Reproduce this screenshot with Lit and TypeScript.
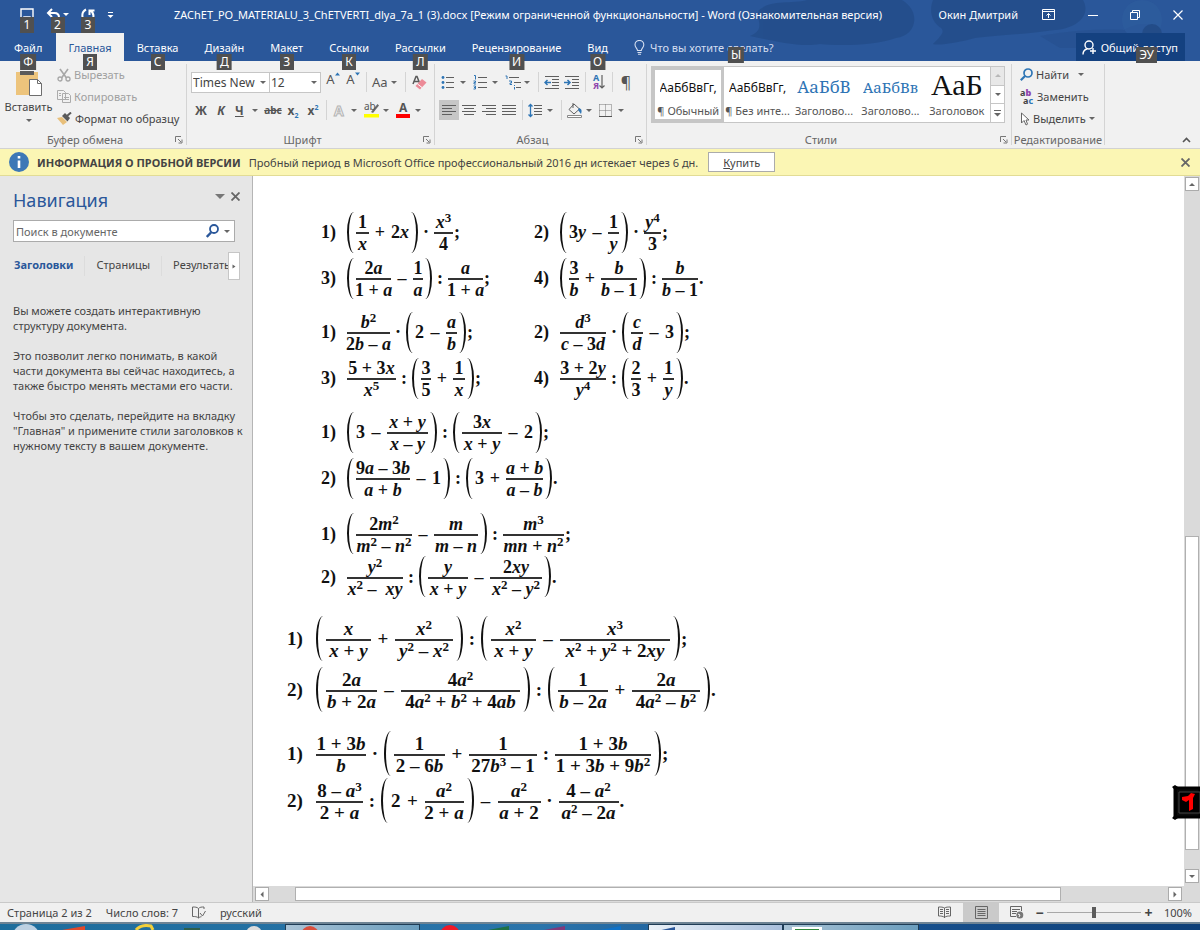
import { LitElement, html, css, svg, nothing, type TemplateResult } from "lit";
import { customElement, property } from "lit/decorators.js";
import { classMap } from "lit/directives/class-map.js";
import { styleMap } from "lit/directives/style-map.js";

const icon = (w: number, h: number, body: TemplateResult | unknown) =>
  html`<svg class="icon" width=${w} height=${h} viewBox="0 0 ${w} ${h}" fill="none" aria-hidden="true">${body}</svg>`;

const lines = (rows: number[][], color = "#5f5f5f") =>
  rows.map(([x1, x2, y]) => svg`<path d="M${x1} ${y}.5H${x2}" stroke=${color}/>`);

const ic = {
  save: () => icon(14, 14, svg`<path d="M1 1h12v12H1z M4 13V9h6v4" stroke="#fff" stroke-width="1.4"/>`),
  undo: () => icon(14, 14, svg`<path d="M6 1L2 5l4 4M2 5h6.500c3 0 4.500 2 4.500 4.500S11 13 8 13" stroke="#fff" stroke-width="2"/>`),
  redo: () => icon(14, 14, svg`<path d="M5 1.500C2 3 1 6 1.500 9s3 4.500 6 4.500 5-3 5-5.500-1-4-3-5.500M8.500 7V2.500h5" stroke="#fff" stroke-width="2"/>`),
  custom: () => icon(7, 8, svg`<path d="M1 1.500h5" stroke="#fff"/><path d="M0.500 4h6L3.500 7z" fill="#fff"/>`),
  ribbonOpt: () => icon(13, 11, svg`<path d="M.5.5h12v10H.5zM.5 2.500h12M6.500 9V4.500M4.500 6.500l2-2 2 2" stroke="#fff"/>`),
  min: () => icon(10, 10, svg`<path d="M0 5.500h10" stroke="#fff"/>`),
  restore: () => icon(10, 10, svg`<path d="M.5 2.500h7v7h-7zM2.500 2.500v-2h7v7h-2" stroke="#fff"/>`),
  close: () => icon(10, 10, svg`<path d="M.5.5l9 9M9.500.5l-9 9" stroke="#fff" stroke-width="1.200"/>`),
  bulb: () => icon(11, 15, svg`<path d="M3.500 10.500C3.500 8.500 1 7.500 1 4.800a4.400 4.400 0 0 1 8.800 0c0 2.700-2.500 3.700-2.500 5.700zM3.500 12.500h4M4 14.300h3" stroke="#d4def0" stroke-width="1.100"/>`),
  share: () => icon(15, 15, svg`<circle cx="7" cy="5" r="4" stroke="#fff" stroke-width="1.400"/><path d="M1 14.500c0-3.500 2-5.200 4.500-5.800M11 8v6M8 11h6" stroke="#fff" stroke-width="1.400"/>`),
  paste: () => icon(28, 28, svg`<path d="M1 3h22v23H1z" fill="#edc47c"/><path d="M5 2h14v4H5z" fill="#5b5b5b"/><path d="M14.500 10.500h8l4 4v12h-12z" fill="#fff" stroke="#6d6d6d"/><path d="M22.500 10.500v4h4" stroke="#6d6d6d"/>`),
  cut: () => icon(14, 14, svg`<path d="M3 1l6.500 9M11 1L4.500 10" stroke="#a6a6a6" stroke-width="1.600"/><circle cx="3" cy="11" r="2" stroke="#a6a6a6" stroke-width="1.300"/><circle cx="11" cy="11" r="2" stroke="#a6a6a6" stroke-width="1.300"/>`),
  copy: () => icon(14, 13, svg`<path d="M.5.5h6l2 2v7h-8zM5.500 3.500h6l2 2v7h-8z" fill="#f1f1f1" stroke="#ababab"/><path d="M2 3.500h2M2 5.500h2M7 7.500h5M7 9.500h5" stroke="#ababab"/>`),
  brush: () => icon(15, 13, svg`<path d="M0 6l5-1 5 5-4 3z" fill="#e8bf7a"/><path d="M5 4l3-3 5 5-2.500 3.500z" fill="#5a5a5a"/><path d="M10 4l4-3.500" stroke="#5a5a5a" stroke-width="2"/>`),
  launcher: () => icon(8, 8, svg`<path d="M.5 6V.5H6M3 3l3 3M7 3.500V7H3.500" stroke="#777"/>`),
  grow: () => icon(5, 4, svg`<path d="M0 3.500h5L2.500.5z" fill="#2e75b5"/>`),
  shrink: () => icon(5, 4, svg`<path d="M0 .5h5L2.500 3.500z" fill="#2e75b5"/>`),
  eraser: () => icon(15, 15, svg`<path d="M1 9L4 1.500h1L8 9M2 6.500h4.500" stroke="#5a5a5a" stroke-width="1.500"/><path d="M3.500 11L10 4l4.500 3.500L8 14.500z" fill="#ec8a97"/><path d="M5.500 9l4.500 3.500" stroke="#fff"/>`),
  pen: () => icon(16, 16, svg`<path d="M7 10l6.500-8 1.500 1.500L9 11z" fill="#6a6a6a"/><path d="M0 12h15v3.500H0z" fill="#ff0"/>`),
  bullets: () => icon(14, 15, svg`<circle cx="2" cy="2.500" r="1.400" fill="#2e75b5"/><circle cx="2" cy="7.500" r="1.400" fill="#2e75b5"/><circle cx="2" cy="12.500" r="1.400" fill="#2e75b5"/>${lines([[5, 13, 2], [5, 13, 7], [5, 13, 12]])}`),
  numbers: () => icon(14, 15, svg`<path d="M1 .5h1.500v4M.5 6h2v1.500H1V9h2M.5 11h2v3H.5M1 12.500h2" stroke="#2e75b5"/>${lines([[5, 14, 2], [5, 14, 7], [5, 14, 12]])}`),
  multi: () => icon(16, 15, svg`<path d="M.5 1H2v3M4 6h2.500v2H5v1.500h2M9.500 10v1M9.500 12v2.500" stroke="#2e75b5"/>${lines([[4, 14, 2], [9, 16, 7], [11, 16, 12]])}`),
  dedent: () => icon(16, 13, svg`<path d="M7 6.500H1M3.500 4L1 6.500 3.500 9" stroke="#2e75b5" stroke-width="1.500"/>${lines([[1, 15, 0], [8, 15, 3], [8, 15, 6], [8, 15, 9], [1, 15, 12]])}`),
  indent: () => icon(16, 13, svg`<path d="M0 6.500h6M3.500 4L6 6.500 3.500 9" stroke="#2e75b5" stroke-width="1.500"/>${lines([[1, 15, 0], [8, 15, 3], [8, 15, 6], [8, 15, 9], [1, 15, 12]])}`),
  down: () => icon(6, 14, svg`<path d="M3 0v13M.5 10.500L3 13l2.500-2.500" stroke="#5f5f5f" stroke-width="1.200"/>`),
  left: () => icon(14, 11, svg`${lines([[0, 14, 0], [0, 10, 3], [0, 14, 6], [0, 10, 9]])}`),
  center: () => icon(14, 11, svg`${lines([[0, 14, 0], [2, 12, 3], [0, 14, 6], [2, 12, 9]])}`),
  right: () => icon(14, 11, svg`${lines([[0, 14, 0], [4, 14, 3], [0, 14, 6], [4, 14, 9]])}`),
  justify: () => icon(14, 11, svg`${lines([[0, 14, 0], [0, 14, 3], [0, 14, 6], [0, 14, 9]])}`),
  spacing: () => icon(14, 15, svg`<path d="M2.500 1v13M.5 3.500l2-2 2 2M.5 11.500l2 2 2-2" stroke="#2e75b5" stroke-width="1.300"/>${lines([[6, 14, 2], [6, 14, 5], [6, 14, 8], [6, 14, 11]])}`),
  bucket: () => icon(16, 15, svg`<path d="M7 1L2 6.500 7 11l5.500-5zM6 0v5" stroke="#5f5f5f"/><path d="M12 5c3 1 3 3 2 6-1-1-2-3-3-4z" fill="#2e75b5"/><path d="M.5 12.500h14v2H.5z" fill="#fff" stroke="#888"/>`),
  borders: () => icon(13, 13, svg`<path d="M.5.5h12v12M.5.5v12M6.500.5v12M.5 6.500h12" stroke="#777" stroke-dasharray="1 1"/><path d="M0 12.500h13" stroke="#555"/>`),
  find: (c = "#2e75b5") => icon(13, 13, svg`<circle cx="8" cy="5" r="4" stroke=${c} stroke-width="1.700"/><path d="M5 8L.8 12.200" stroke=${c} stroke-width="2.200"/>`),
  cursor: () => icon(10, 14, svg`<path d="M1.500 1v10l2.500-2.500L6 13l1.500-.8L6 8h3z" fill="#fff" stroke="#666"/>`),
  chevronUp: () => icon(9, 6, svg`<path d="M1 5l3.500-3.500L8 5" stroke="#555" stroke-width="1.600"/>`),
  cross: () => icon(9, 9, svg`<path d="M.5.5l8 8M8.500.5l-8 8" stroke="#666" stroke-width="1.800"/>`),
  more: () => icon(7, 7, svg`<path d="M0 .5h7" stroke="#666"/><path d="M0 3h7L3.500 6.500z" fill="#666"/>`),
  info: () => icon(20, 20, svg`<circle cx="10" cy="10" r="10" fill="#3d78b6"/><path d="M10 8.500V16M10 4v2.500" stroke="#fff" stroke-width="2.600"/>`),
  proof: () => icon(14, 13, svg`<path d="M6.500 2.500C5 1 3 1 .5 1v9.500c2.500 0 4.500 0 6 1.500zM6.500 2.500c1.500-1.500 3-1.500 5.500-1.500v2M6.500 12c1-1 2-1.200 3-1.300M8 7l2.500 3L13.500 5" stroke="#666"/>`),
  read: () => icon(14, 13, svg`<path d="M6.500 2C5 1 3 1 .5 1v9c2.500 0 4.500 0 6 1.500C8 10 10 10 12.500 10V1C10 1 8 1 6.500 2zV12M2 3.500h3M2 5.500h3M2 7.500h3M8 3.500h3M8 5.500h3M8 7.500h3" stroke="#666"/>`),
  print: () => icon(13, 13, svg`<path d="M.5.500h12v12H.5zM2.500 3.500h8M2.500 5.500h8M2.500 7.500h8M2.500 9.500h8" stroke="#666"/>`),
  web: () => icon(14, 13, svg`<path d="M11.500 5V.5H.5v10H6M2 3.500h8M2 5.500h5M2 7.500h4" stroke="#666"/><circle cx="9.800" cy="9" r="3.500" fill="#777"/><path d="M8 8l2 1-1 2" stroke="#fff"/>`),
  search: () => icon(13, 14, svg`<circle cx="8" cy="5" r="4" stroke="#2a579a" stroke-width="1.800"/><path d="M5 8.500L.8 13" stroke="#2a579a" stroke-width="2.400"/>`),
};

const base = css`
  :host { box-sizing: border-box; }
  *, *::before, *::after { box-sizing: border-box; }
  button, input, select { font: inherit; color: inherit; background: none; border: 0; padding: 0; margin: 0; border-radius: 0; outline: 0; }
  .icon { display: block; flex: none; }
  .caret { width: 0; height: 0; flex: none; border: 3px solid transparent; border-top-color: #666; border-bottom: 0; }
`;

/** One worked expression: fractions, brackets, terms and signs laid out in a row. */
type Token = string | [num: string, den: string, bar: number];

@customElement("math-line")
class MathLine extends LitElement {
  @property() label = "";
  @property({ attribute: false }) tokens: Token[] = [];

  static styles = [base, css`
    :host { display: flex; align-items: center; font: bold var(--size, 18px)/20px "Liberation Serif", "Times New Roman", serif; color: #111; white-space: pre; }
    .label { width: var(--label, 26px); flex: none; }
    .sign { width: var(--sign, 22px); text-align: center; flex: none; }
    .tight { width: var(--tight, 16px); text-align: center; flex: none; }
    .end { padding-left: 1px; }
    .frac { display: flex; flex-direction: column; align-items: center; flex: none; }
    .frac > span { height: 20px; display: flex; justify-content: center; width: 100%; }
    .frac > span + span { border-top: 2px solid #333; }
    .paren { width: 7px; height: var(--paren, 41px); flex: none; border-left: 2px solid #111; border-radius: 7px 0 0 7px / 50% 0 0 50%; margin-right: var(--inner, 2px); }
    .paren.shut { border-left: 0; border-right: 2px solid #111; border-radius: 0 7px 7px 0 / 0 50% 50% 0; margin: 0 0 0 var(--inner, 2px); }
    sup { font-size: 13px; line-height: 0; vertical-align: 6px; }
  `];

  private term(source: string) {
    return html`<span>${source.split(/(\^\d|[a-z])/).map((p) =>
      p[0] === "^" ? html`<sup>${p.slice(1)}</sup>` : /^[a-z]$/.test(p) ? html`<i>${p}</i>` : p)}</span>`;
  }

  private token(t: Token) {
    if (Array.isArray(t)) {
      return html`<span class="frac" style=${styleMap({ width: `${t[2]}px` })}><span>${this.term(t[0])}</span><span>${this.term(t[1])}</span></span>`;
    }
    if (t === "(") return html`<span class="paren" role="img" aria-label="("></span>`;
    if (t === ")") return html`<span class="paren shut" role="img" aria-label=")"></span>`;
    if (t === "+" || t === "−") return html`<span class="sign">${t === "−" ? "–" : t}</span>`;
    if (t === ":" || t === "·") return html`<span class="tight">${t}</span>`;
    if (t === ";" || t === ".") return html`<span class="end">${t}</span>`;
    return this.term(t);
  }

  render() {
    return html`<span class="label">${this.label}</span>${this.tokens.map((t) => this.token(t))}`;
  }
}

interface Block { kind: string; items: [string, Token[]][]; }

const BLOCKS: Block[] = [
  { kind: "pair", items: [
    ["1)", ["(", ["1", "x", 13], "+", "2x", ")", "·", ["x^3", "4", 19], ";"]],
    ["2)", ["(", "3y", "−", ["1", "y", 11], ")", "·", ["y^4", "3", 17], ";"]],
    ["3)", ["(", ["2a", "1 + a", 35], "−", ["1", "a", 10], ")", ":", ["a", "1 + a", 35], ";"]],
    ["4)", ["(", ["3", "b", 10], "+", ["b", "b – 1", 36], ")", ":", ["b", "b – 1", 36], "."]],
  ] },
  { kind: "pair", items: [
    ["1)", [["b^2", "2b – a", 43], "·", "(", "2", "−", ["a", "b", 11], ")", ";"]],
    ["2)", [["d^3", "c – 3d", 46], "·", "(", ["c", "d", 12], "−", "3", ")", ";"]],
    ["3)", [["5 + 3x", "x^5", 49], ":", "(", ["3", "5", 10], "+", ["1", "x", 12], ")", ";"]],
    ["4)", [["3 + 2y", "y^4", 46], ":", "(", ["2", "3", 10], "+", ["1", "y", 11], ")", "."]],
  ] },
  { kind: "single", items: [
    ["1)", ["(", "3", "−", ["x + y", "x – y", 41], ")", ":", "(", ["3x", "x + y", 40], "−", "2", ")", ";"]],
    ["2)", ["(", ["9a – 3b", "a + b", 54], "−", "1", ")", ":", "(", "3", "+", ["a + b", "a – b", 37], ")", "."]],
  ] },
  { kind: "dense", items: [
    ["1)", ["(", ["2m^2", "m^2 – n^2", 56], "−", ["m", "m – n", 44], ")", ":", ["m^3", "mn + n^2", 61], ";"]],
    ["2)", [["y^2", "x^2 –  xy", 56], ":", "(", ["y", "x + y", 40], "−", ["2xy", "x^2 – y^2", 52], ")", "."]],
  ] },
  { kind: "large", items: [
    ["1)", ["(", ["x", "x + y", 45], "+", ["x^2", "y^2 – x^2", 58], ")", ":", "(", ["x^2", "x + y", 45], "−", ["x^3", "x^2 + y^2 + 2xy", 110], ")", ";"]],
    ["2)", ["(", ["2a", "b + 2a", 51], "−", ["4a^2", "4a^2 + b^2 + 4ab", 119], ")", ":", "(", ["1", "b – 2a", 50], "+", ["2a", "4a^2 – b^2", 68], ")", "."]],
  ] },
  { kind: "large last", items: [
    ["1)", [["1 + 3b", "b", 50], "·", "(", ["1", "2 – 6b", 51], "+", ["1", "27b^3 – 1", 68], ":", ["1 + 3b", "1 + 3b + 9b^2", 96], ")", ";"]],
    ["2)", [["8 – a^3", "2 + a", 47], ":", "(", "2", "+", ["a^2", "2 + a", 39], ")", "−", ["a^2", "a + 2", 43], "·", ["4 – a^2", "a^2 – 2a", 60], "."]],
  ] },
];

const TABS: [string, string][] = [
  ["Файл", "Ф"], ["Главная", "Я"], ["Вставка", "С"], ["Дизайн", "Д"], ["Макет", "З"],
  ["Ссылки", "К"], ["Рассылки", "Л"], ["Рецензирование", "И"], ["Вид", "О"],
];

const STYLES: [string, string, string][] = [
  ["АаБбВвГг,", "¶ Обычный", "body"], ["АаБбВвГг,", "¶ Без инте...", "body"],
  ["АаБбВ", "Заголово...", "h1"], ["АаБбВв", "Заголово...", "h2"], ["АаБ", "Заголовок", "title"],
];

@customElement("app-root")
class AppRoot extends LitElement {
  static styles = [base, css`
    :host { display: flex; flex-direction: column; height: 100vh; overflow: hidden; position: relative; font: 11px/15px "Noto Sans", "Open Sans", sans-serif; color: #444; background: #fff; }
    .tip { position: absolute; top: 100%; left: 50%; transform: translate(-50%, -7px); min-width: 14px; height: 16px; padding: 0 3px; background: #505050; color: #fff; font-size: 12px; line-height: 16px; text-align: center; z-index: 3; }
    header { background: #2a579a; color: #fff; position: relative; flex: none; }
    .clouds { position: absolute; top: 0; right: 0; }
    .titlebar { display: flex; align-items: center; height: 33px; padding-bottom: 4px; position: relative; }
    .qat { display: flex; align-items: center; width: 120px; padding-left: 20px; gap: 12px; }
    .qat button { position: relative; display: flex; align-items: center; gap: 3px; }
    .qat .caret { border-top-color: #fff; }
    .qat .tip { transform: translate(-50%, -5px); }
    .title { flex: 1; text-align: center; white-space: nowrap; overflow: hidden; }
    .user { width: 82px; text-align: right; white-space: nowrap; }
    .win { display: flex; justify-content: space-between; width: 182px; padding: 0 17px 0 24px; }
    .tabs { display: flex; height: 28px; position: relative; }
    .tab { position: relative; padding: 0 13px; display: flex; align-items: center; white-space: nowrap; }
    .tab.file { padding: 0 14px; }
    .tab.on { background: #f1f1f1; color: #2a579a; padding: 0 12px; }
    .tell { position: relative; display: flex; align-items: center; gap: 5px; margin-left: 13px; flex: 1; }
    .tell input { width: 130px; color: #d4def0; }
    .tell input::placeholder { color: #d4def0; opacity: 1; }
    .tell .tip { left: 102px; transform: translate(-50%, -14px); }
    .share { position: relative; background: #144180; display: flex; align-items: center; gap: 4px; padding: 0 7px 0 6px; margin-right: 15px; white-space: nowrap; }
    .share .tip { left: auto; right: 28px; transform: translateY(-14px); }

    .ribbon { display: flex; height: 88px; background: #f1f1f1; border-bottom: 1px solid #d2d2d2; flex: none; }
    .group { position: relative; display: flex; flex-direction: column; padding: 8px 4px 0; border-right: 1px solid #d4d4d4; margin: 3px 0; flex: none; }
    .group > footer { position: absolute; left: 0; right: 0; bottom: -2px; text-align: center; color: #666; display: flex; justify-content: center; height: 15px; padding-right: 16px; }
    .group > footer.bare { padding-right: 0; }
    .group > footer button { position: absolute; right: 3px; top: 4px; }
    .clip { width: 187px; } .font { width: 248px; } .para { width: 212px; } .styles { width: 365px; } .edit { width: 93px; }
    .clip { flex-direction: row; padding-top: 0; }
    .paste { width: 49px; display: flex; flex-direction: column; align-items: center; padding-top: 5px; gap: 2px; }
    .paste .caret { margin-top: 3px; }
    .stack { display: flex; flex-direction: column; gap: 1px; }
    .stack button { display: flex; align-items: center; gap: 3px; height: 21px; white-space: nowrap; color: #444; padding-left: 4px; }
    .stack button:disabled { color: #a0a0a0; }
    .line { display: flex; align-items: center; height: 20px; }
    .line + .line { margin-top: 8px; }
    .combo { position: relative; height: 21px; background: #fff; border: 1px solid #c6c6c6; display: flex; align-items: center; }
    .combo select { width: 100%; height: 19px; appearance: none; padding: 0 13px 0 1px; font-size: 12px; text-overflow: clip; overflow: hidden; }
    .combo .caret { position: absolute; right: 3px; top: 8px; pointer-events: none; }
    .combo.face { width: 79px; } .combo.size { width: 52px; margin-left: -1px; margin-right: 2px; }
    .tool { width: 20px; height: 20px; display: flex; align-items: center; justify-content: center; flex: none; font-weight: bold; font-size: 12px; color: #555; }
    .tool.drop { width: 32px; justify-content: space-between; padding: 0 5px 0 2px; }
    .tool.on { background: #c6c6c6; }
    .tool sub, .tool sup { font-size: 7px; line-height: 0; color: #2e75b5; }
    .tool.plain { font-weight: normal; font-size: 13px; }
    .tool.small { font-size: 10px; }
    .tool.pad { padding-left: 4px; }
    .raised { align-items: flex-start; }
    .ghost { color: #f1f1f1; -webkit-text-stroke: 1px #b4b4b4; font-size: 14px; }
    .red { border-bottom: 4px solid #f00; line-height: 12px; padding: 0 3px; height: 16px; }
    .mark { position: relative; display: block; }
    .mark span { position: absolute; left: 0; top: -3px; font-size: 10px; font-weight: normal; }
    .az { font-size: 9px; line-height: 8px; color: #2e75b5; } .az span { display: block; } .az span + span { color: #8e44ad; }
    .pil { font-size: 16px; }
    .sep { width: 1px; height: 20px; background: #d4d4d4; margin: 0 3px; flex: none; }
    .gallery { display: flex; height: 57px; background: #fff; border: 1px solid #c6c6c6; width: 354px; margin-top: -6px; }
    .style { width: 67px; flex: 1; display: flex; flex-direction: column; align-items: center; justify-content: flex-end; overflow: hidden; white-space: nowrap; padding-bottom: 4px; border: 0 solid #c6c6c6; color: #555; }
    .style.on { border-width: 3px; padding-bottom: 1px; }
    .sample { height: 30px; line-height: 30px; overflow: hidden; color: #111; max-width: 62px; }
    .s-body { font-size: 12px; }
    .s-h1 { font-family: "Noto Serif", "Liberation Serif", serif; font-size: 17px; line-height: 28px; color: #2e74b5; }
    .s-h2 { font-family: "Noto Serif", "Liberation Serif", serif; font-size: 15px; line-height: 28px; color: #2e74b5; }
    .s-title { font-family: "Liberation Serif", serif; font-size: 30px; line-height: 24px; max-width: 55px; }
    .scroll { width: 14px; display: flex; flex-direction: column; border-left: 1px solid #c6c6c6; }
    .scroll button { flex: 1; display: flex; align-items: center; justify-content: center; }
    .scroll button + button { border-top: 1px solid #c6c6c6; }
    .scroll button:first-child { background: #e8e8e8; }
    .scroll button:first-child .caret { border-top-color: #b8b8b8; }
    .up { transform: rotate(180deg); }
    .edit { padding-top: 0; }
    .rep { display: flex; flex-direction: column; font-size: 9px; line-height: 8px; width: 14px; font-weight: bold; text-align: left; } .rep > span { height: 8px; } .rep b { color: #8e44ad; } .rep i { font-style: normal; color: #2e75b5; } .rep span + span { padding-left: 3px; }
    .fold { margin-left: auto; align-self: flex-end; padding: 0 9px 5px; }

    .notice { display: flex; align-items: center; height: 27px; background: #fbf6b4; border-bottom: 1px solid #e2dc95; padding: 0 10px 0 9px; white-space: nowrap; flex: none; }
    .notice strong { margin: 0 8px; }
    .buy { width: 67px; height: 20px; background: #fff; border: 1px solid #ababab; margin-left: 10px; }
    .notice .x { margin-left: auto; }

    main { flex: 1; min-height: 0; display: flex; background: #fff; }
    .nav { width: 253px; background: #e6e6e6; border-right: 1px solid #b5b5b5; padding: 12px 4px 0 13px; flex: none; }
    .head { display: flex; align-items: center; gap: 6px; height: 24px; padding-right: 8px; }
    .head h2 { flex: 1; margin: 0; font-weight: normal; font-size: 18px; line-height: 24px; color: #2a579a; }
    .head .caret { border-width: 5px 5px 0; border-top-color: #777; }
    .head button { display: flex; align-items: center; height: 9px; margin-bottom: 7px; }
    .find { display: flex; align-items: center; width: 222px; height: 22px; background: #fff; border: 1px solid #ababab; margin-top: 8px; padding: 0 4px 0 2px; gap: 5px; }
    .find input { flex: 1; min-width: 0; }
    .find input::placeholder { color: #666; opacity: 1; }
    .views { display: flex; align-items: center; height: 28px; margin-top: 10px; width: 227px; }
    .views .v { padding: 0 11px 3px; height: 20px; border-right: 1px solid #dcdcdc; }
    .views .v.on { font-weight: bold; color: #2a579a; padding: 0 11px 3px 1px; }
    .views .clip3 { flex: 1; overflow: hidden; white-space: nowrap; text-align: left; padding-left: 11px; border: 0; padding-right: 0; }
    .views .next { width: 12px; height: 28px; border: 1px solid #c6c6c6; background: #fff; display: flex; align-items: center; justify-content: center; }
    .next .caret { transform: rotate(-90deg); border-width: 3px 2px 0; }
    .nav p { margin: 0 0 15px; }
    .help { padding-top: 23px; }

    .doc { flex: 1; min-width: 0; display: flex; flex-direction: column; }
    .sheet { flex: 1; min-height: 0; display: flex; }
    .page { flex: 1; min-width: 0; overflow: hidden; padding: 33px 0 0 68px; }
    .block { display: grid; grid-auto-rows: 46px; margin-bottom: 8px; }
    .pair { grid-template-columns: 213px 1fr; }
    .single { margin-bottom: 11px; }
    .dense { grid-auto-rows: 43px; margin-bottom: 15px; }
    .large { grid-auto-rows: 51px; margin: 0 0 15px -34px; --size: 19px; --label: 29px; --sign: 24px; --tight: 18px; --paren: 45px; --inner: 3px; }
    .last { grid-auto-rows: 47px; }
    .vbar { width: 16px; background: #dadada; display: flex; flex-direction: column; align-items: center; padding: 1px 0 3px; flex: none; }
    .vbar button, .hbar button { width: 14px; height: 14px; background: #fff; border: 1px solid #ababab; display: flex; align-items: center; justify-content: center; flex: none; }
    .vthumb { width: 14px; flex: 314; background: #fff; border: 1px solid #b0b0b0; }
    .vbefore { flex: 347; } .vafter { flex: 19; }
    .hbar { height: 16px; background: #dadada; display: flex; align-items: center; padding: 0 18px 0 2px; flex: none; }
    .hthumb { height: 14px; flex: 767; background: #fff; border: 1px solid #b0b0b0; }
    .hbefore { flex: 26; } .hafter { flex: 107; }
    .lt { transform: rotate(90deg); } .rt { transform: rotate(-90deg); }

    .status { display: flex; align-items: center; height: 20px; background: #f0f0f0; border-top: 1px solid #c9c9c9; flex: none; padding: 0 8px 0 7px; }
    .status .words { margin: 0 14px; }
    .status .lang { margin-left: 14px; margin-right: auto; }
    .mode { width: 36px; height: 19px; display: flex; align-items: center; justify-content: center; }
    .mode.on { background: #cacaca; }
    .zoom { width: 94px; height: 14px; appearance: none; margin: 0 3px; }
    .zoom::-webkit-slider-runnable-track { height: 1px; background: #a8a8a8; }
    .zoom::-webkit-slider-thumb { appearance: none; width: 4px; height: 11px; margin-top: -5px; background: #5c5c5c; }
    .step { font-weight: bold; font-size: 14px; line-height: 14px; width: 9px; }
    .pct { width: 39px; text-align: right; }
    .task { display: flex; height: 8px; background: linear-gradient(90deg, #1d6d9c, #2a74ab 45%, #1b5796 65%, #0d3f78); border-top: 2px solid #6d8394; flex: none; overflow: hidden; }
    .task .pins { flex: 285 0 0; } .task .mid { flex: 228 0 0; } .task .rest { flex: 283 0 0; }
    .task .app { flex: 134 0 0; background: linear-gradient(90deg, #a9c3d6, #6a9dbd); border: 1px solid #1e3c55; border-bottom: 0; }
    .task .app.front { background: linear-gradient(90deg, #eaf1f8, #a9bfdc); }
    .task .icon { height: 6px; }
    .gadget { position: absolute; right: 0; top: 784px; z-index: 4; }
  `];

  private tip(key: string) { return html`<span class="tip">${key}</span>`; }
  private caret() { return html`<span class="caret"></span>`; }
  private tool(body: unknown, name: string, drop = false, extra: Record<string, boolean> = {}) {
    return html`<button class=${classMap({ tool: true, drop, ...extra })} aria-label=${name}>${body}${drop ? this.caret() : nothing}</button>`;
  }
  private footer(text: string, launch = true) {
    return html`<footer class=${classMap({ bare: !launch })}>${text}${launch ? html`<button aria-label="${text}: параметры">${ic.launcher()}</button>` : nothing}</footer>`;
  }

  private header() {
    return html`<header>
      <svg class="clouds" width="470" height="48" viewBox="0 0 470 48" aria-hidden="true">
        <g fill="#234c88" opacity="0.75">
          <path d="M20 36C40 28 20 14 32 8c10-8 30-4 45-8h95c20 12 14 36-6 38-20 8-60 8-76 6-20 4-50-4-70-8z"/>
          <path d="M203 0h150c8 14-4 28-28 30-30 4-60 6-80 8-14 4-36 8-42 6 8-8 12-12 8-16-10-6-12-18-8-28z"/>
          <path d="M310 36c20-4 60-8 84-6 20-12 36-4 38 6l-10 12H330z" opacity="0.5"/>
        </g>
        <circle cx="412" cy="20" r="20" fill="#2f5d9e" opacity="0.6"/>
        <circle cx="422" cy="34" r="10" fill="#234c88"/>
      </svg>
      <div class="titlebar">
        <div class="qat">
          <button aria-label="Сохранить">${ic.save()}${this.tip("1")}</button>
          <button aria-label="Отменить">${ic.undo()}${this.caret()}${this.tip("2")}</button>
          <button aria-label="Повторить">${ic.redo()}${this.tip("3")}</button>
          <button aria-label="Настройка панели">${ic.custom()}</button>
        </div>
        <div class="title">ZAChET_PO_MATERIALU_3_ChETVERTI_dlya_7a_1 (3).docx [Режим ограниченной функциональности] - Word (Ознакомительная версия)</div>
        <div class="user">Окин Дмитрий</div>
        <div class="win">
          <button aria-label="Лента">${ic.ribbonOpt()}</button><button aria-label="Свернуть">${ic.min()}</button>
          <button aria-label="Восстановить">${ic.restore()}</button><button aria-label="Закрыть">${ic.close()}</button>
        </div>
      </div>
      <nav class="tabs">
        ${TABS.map(([name, key], i) => html`<button class=${classMap({ tab: true, file: i === 0, on: i === 1 })}>${name}${this.tip(key)}</button>`)}
        <label class="tell">${ic.bulb()}<input placeholder="Что вы хотите сделать?" aria-label="Что вы хотите сделать?">${this.tip("Ы")}</label>
        <button class="share">${ic.share()}Общий доступ${this.tip("ЭУ")}</button>
      </nav>
    </header>`;
  }

  private ribbon() {
    const sep = html`<span class="sep"></span>`;
    return html`<section class="ribbon">
      <div class="group clip">
        <button class="paste">${ic.paste()}Вставить${this.caret()}</button>
        <div class="stack">
          <button disabled>${ic.cut()}Вырезать</button>
          <button disabled>${ic.copy()}Копировать</button>
          <button>${ic.brush()}Формат по образцу</button>
        </div>
        ${this.footer("Буфер обмена")}
      </div>
      <div class="group font">
        <div class="line">
          <span class="combo face"><select aria-label="Шрифт"><option>Times New Roman</option></select>${this.caret()}</span>
          <span class="combo size"><select aria-label="Размер"><option>12</option></select>${this.caret()}</span>
          ${this.tool(html`<span>A</span>${ic.grow()}`, "Увеличить размер", false, { plain: true, raised: true })}
          ${this.tool(html`<span>A</span>${ic.shrink()}`, "Уменьшить размер", false, { plain: true, raised: true })}
          ${sep}${this.tool("Aa", "Регистр", true, { plain: true })}${sep}
          ${this.tool(ic.eraser(), "Очистить формат")}
        </div>
        <div class="line">
          ${this.tool("Ж", "Полужирный")}${this.tool(html`<i>К</i>`, "Курсив")}
          ${this.tool(html`<u>Ч</u>`, "Подчёркнутый", true, { pad: true })}
          ${this.tool(html`<s>abc</s>`, "Зачёркнутый", false, { small: true })}
          ${this.tool(html`<span>x<sub>2</sub></span>`, "Подстрочный")}${this.tool(html`<span>x<sup>2</sup></span>`, "Надстрочный")}
          ${sep}${this.tool(html`<span class="ghost">A</span>`, "Эффекты", true, { pad: true })}
          ${this.tool(html`<span class="mark">${ic.pen()}<span>ab</span></span>`, "Цвет выделения", true)}
          ${this.tool(html`<span class="red">A</span>`, "Цвет текста", true)}
        </div>
        ${this.footer("Шрифт")}
      </div>
      <div class="group para">
        <div class="line">
          ${this.tool(ic.bullets(), "Маркеры", true)}${this.tool(ic.numbers(), "Нумерация", true)}${this.tool(ic.multi(), "Многоуровневый список", true)}
          ${sep}${this.tool(ic.dedent(), "Уменьшить отступ")}${this.tool(ic.indent(), "Увеличить отступ")}
          ${sep}${this.tool(html`<span class="az"><span>А</span><span>Я</span></span>${ic.down()}`, "Сортировка")}
          ${sep}${this.tool(html`<span class="pil">¶</span>`, "Знаки", false, { plain: true })}
        </div>
        <div class="line">
          ${this.tool(ic.left(), "По левому краю", false, { on: true })}${this.tool(ic.center(), "По центру")}
          ${this.tool(ic.right(), "По правому краю")}${this.tool(ic.justify(), "По ширине")}
          ${sep}${this.tool(ic.spacing(), "Интервал", true)}${sep}
          ${this.tool(ic.bucket(), "Заливка", true)}${this.tool(ic.borders(), "Границы", true)}
        </div>
        ${this.footer("Абзац")}
      </div>
      <div class="group styles">
        <div class="gallery">
          ${STYLES.map(([sample, name, kind], i) => html`<button class=${classMap({ style: true, on: i === 0 })}><span class="sample s-${kind}">${sample}</span><span>${name}</span></button>`)}
          <div class="scroll">
            <button aria-label="Вверх"><span class="caret up"></span></button>
            <button aria-label="Вниз">${this.caret()}</button>
            <button aria-label="Дополнительно">${ic.more()}</button>
          </div>
        </div>
        ${this.footer("Стили")}
      </div>
      <div class="group edit">
        <div class="stack">
          <button>${ic.find()}Найти&nbsp;&nbsp;${this.caret()}</button>
          <button><span class="rep"><span>a<b>b</b></span><span>a<i>c</i></span></span>Заменить</button>
          <button>${ic.cursor()}Выделить${this.caret()}</button>
        </div>
        ${this.footer("Редактирование", false)}
      </div>
      <button class="fold" aria-label="Свернуть ленту">${ic.chevronUp()}</button>
    </section>`;
  }

  render() {
    return html`
      ${this.header()}${this.ribbon()}
      <div class="notice">
        ${ic.info()}<strong>ИНФОРМАЦИЯ О ПРОБНОЙ ВЕРСИИ</strong>
        <span>Пробный период в Microsoft Office профессиональный 2016 дн истекает через 6 дн.</span>
        <button class="buy"><u>К</u>упить</button>
        <button class="x" aria-label="Закрыть">${ic.cross()}</button>
      </div>
      <main>
        <aside class="nav">
          <div class="head"><h2>Навигация</h2><button aria-label="Параметры">${this.caret()}</button><button aria-label="Закрыть">${ic.cross()}</button></div>
          <label class="find"><input placeholder="Поиск в документе" aria-label="Поиск в документе">${ic.search()}${this.caret()}</label>
          <div class="views">
            <button class="v on">Заголовки</button><button class="v">Страницы</button><button class="v clip3">Результаты</button>
            <button class="next" aria-label="Далее">${this.caret()}</button>
          </div>
          <div class="help">
            <p>Вы можете создать интерактивную структуру документа.</p>
            <p>Это позволит легко понимать, в какой части документа вы сейчас находитесь, а также быстро менять местами его части.</p>
            <p>Чтобы это сделать, перейдите на вкладку "Главная" и примените стили заголовков к нужному тексту в вашем документе.</p>
          </div>
        </aside>
        <section class="doc">
          <div class="sheet">
            <article class="page">
              ${BLOCKS.map((b) => html`<div class="block ${b.kind}">${b.items.map(([l, t]) => html`<math-line .label=${l} .tokens=${t}></math-line>`)}</div>`)}
            </article>
            <div class="vbar">
              <button aria-label="Вверх"><span class="caret up"></span></button><span class="vbefore"></span><span class="vthumb"></span><span class="vafter"></span>
              <button aria-label="Вниз">${this.caret()}</button>
            </div>
          </div>
          <div class="hbar">
            <button aria-label="Влево"><span class="caret lt"></span></button><span class="hbefore"></span><span class="hthumb"></span><span class="hafter"></span>
            <button aria-label="Вправо"><span class="caret rt"></span></button>
          </div>
        </section>
      </main>
      <footer class="status">
        <span>Страница 2 из 2</span><span class="words">Число слов: 7</span>${ic.proof()}<span class="lang">русский</span>
        <button class="mode" aria-label="Чтение">${ic.read()}</button><button class="mode on" aria-label="Разметка">${ic.print()}</button><button class="mode" aria-label="Веб">${ic.web()}</button>
        <button class="step" aria-label="Уменьшить">−</button><input class="zoom" type="range" min="0" max="200" value="100" aria-label="Масштаб"><button class="step" aria-label="Увеличить">+</button>
        <span class="pct">100%</span>
      </footer>
      <div class="task">
        <div class="pins"><svg class="icon" width="285" height="6" aria-hidden="true"><circle cx="26" cy="14" r="14" fill="#bcd0e2"/><path d="M62 6l23-4v4z" fill="#e2492b"/><path d="M136 6c4-5 10-5 15-4l2 4" stroke="#f3cf3a" stroke-width="3" fill="none"/><path d="M184 4h16v2h-16z" fill="#2e5e4a"/><circle cx="254" cy="10" r="8" fill="#dcdcdc"/></svg></div>
        <div class="app"><svg class="icon" width="60" height="6" aria-hidden="true"><circle cx="24" cy="10" r="9" fill="#d94f3d"/></svg></div>
        <div class="mid"><svg class="icon" width="228" height="6" aria-hidden="true"><circle cx="30" cy="11" r="10" fill="#f01a28"/><path d="M68 6l21-4v4z" fill="#1e7145"/><path d="M124 6l21-4v4z" fill="#80397b"/><path d="M180 6l21-4v4z" fill="#0f72c8"/></svg></div>
        <div class="app front"><svg class="icon" width="60" height="6" aria-hidden="true"><path d="M8 6l18-4v4z" fill="#2a579a"/></svg></div>
        <div class="app"><svg class="icon" width="60" height="6" aria-hidden="true"><path d="M8 2h30v4H8z" fill="#fff"/><path d="M11 4h24v2H11z" fill="#2f8a3c"/></svg></div>
        <div class="rest"></div>
      </div>
      <svg class="gadget" width="29" height="37" viewBox="0 0 29 37" aria-hidden="true">
        <path d="M4 4h25v29H4z" fill="#0a0a0a" stroke="#000" stroke-width="3"/><path d="M8 8h21v21H8z" stroke="#444" fill="#000"/>
        <path d="M1 3l3-2 3 2-3 3zM1 34l3 2 3-2-3-3zM3 6h3v25H3z" fill="#000"/>
        <path d="M11 13l6-1 3-3 4 1-2 4v11l-4 2v-11l-3 2-4-2z" fill="#f00"/>
      </svg>`;
  }
}
